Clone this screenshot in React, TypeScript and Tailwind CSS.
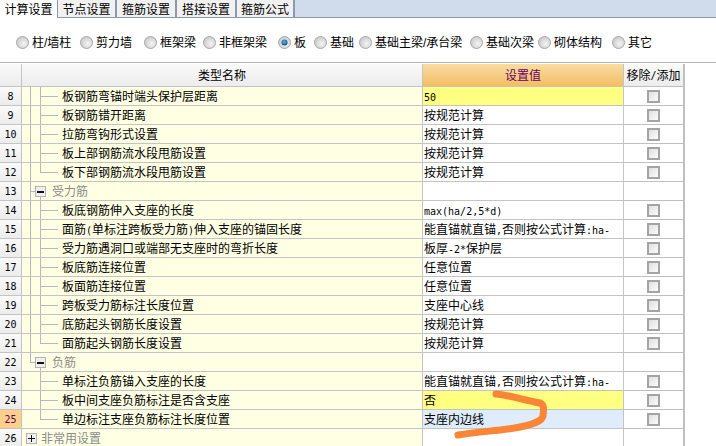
const font = "font-['Liberation_Sans','Noto_Sans_CJK_SC',sans-serif]";

const tabs = [
  { label: '节点设置', width: 'w-[59px]' },
  { label: '箍筋设置', width: 'w-[60px]' },
  { label: '搭接设置', width: 'w-[60px]' },
  { label: '箍筋公式', width: 'w-[58px]' },
];

const radios = [
  { label: '柱/墙柱', width: 'w-[64px]' },
  { label: '剪力墙', width: 'w-[64px]' },
  { label: '框架梁', width: 'w-[59px]' },
  { label: '非框架梁', width: 'w-[75px]' },
  { label: '板', width: 'w-[36px]', checked: true },
  { label: '基础', width: 'w-[45px]' },
  { label: '基础主梁/承台梁', width: 'w-[111px]' },
  { label: '基础次梁', width: 'w-[68px]' },
  { label: '砌体结构', width: 'w-[74px]' },
  { label: '其它', width: 'w-[50px]' },
];

type Kind = 'leaf' | 'last' | 'group' | 'leafB' | 'lastB' | 'groupEnd' | 'leafC' | 'lastC' | 'collapsed';

type Row = {
  no: number;
  name: string;
  value: string;
  kind: Kind;
  valueBg?: string;
};

const rows: Row[] = [
  { no: 8, name: '板钢筋弯锚时端头保护层距离', value: '50', kind: 'leaf', valueBg: 'bg-[#ffff80]' },
  { no: 9, name: '板钢筋错开距离', value: '按规范计算', kind: 'leaf' },
  { no: 10, name: '拉筋弯钩形式设置', value: '按规范计算', kind: 'leaf' },
  { no: 11, name: '板上部钢筋流水段甩筋设置', value: '按规范计算', kind: 'leaf' },
  { no: 12, name: '板下部钢筋流水段甩筋设置', value: '按规范计算', kind: 'last' },
  { no: 13, name: '受力筋', value: '', kind: 'group' },
  { no: 14, name: '板底钢筋伸入支座的长度', value: 'max(ha/2,5*d)', kind: 'leafB' },
  { no: 15, name: '面筋(单标注跨板受力筋)伸入支座的锚固长度', value: '能直锚就直锚,否则按公式计算:ha-', kind: 'leafB' },
  { no: 16, name: '受力筋遇洞口或端部无支座时的弯折长度', value: '板厚-2*保护层', kind: 'leafB' },
  { no: 17, name: '板底筋连接位置', value: '任意位置', kind: 'leafB' },
  { no: 18, name: '板面筋连接位置', value: '任意位置', kind: 'leafB' },
  { no: 19, name: '跨板受力筋标注长度位置', value: '支座中心线', kind: 'leafB' },
  { no: 20, name: '底筋起头钢筋长度设置', value: '按规范计算', kind: 'leafB' },
  { no: 21, name: '面筋起头钢筋长度设置', value: '按规范计算', kind: 'lastB' },
  { no: 22, name: '负筋', value: '', kind: 'groupEnd' },
  { no: 23, name: '单标注负筋锚入支座的长度', value: '能直锚就直锚,否则按公式计算:ha-', kind: 'leafC' },
  { no: 24, name: '板中间支座负筋标注是否含支座', value: '否', kind: 'leafC', valueBg: 'bg-[#ffff80]' },
  { no: 25, name: '单边标注支座负筋标注长度位置', value: '支座内边线', kind: 'lastC', valueBg: 'bg-[#deecfb]' },
  { no: 26, name: '非常用设置', value: '', kind: 'collapsed' },
];

// latin runs are half width (6px) in the grid, like a bitmap song face
const Mixed = ({ text }: { text: string }) => (
  <>
    {text.split(/([\x20-\x7e]+)/).map((part, index) =>
      index % 2 === 1 ? (
        <span key={index} className="font-['DejaVu_Sans_Mono',monospace] text-[10px]">{part}</span>
      ) : (
        <span key={index}>{part}</span>
      )
    )}
  </>
);

const Radio = ({ checked }: { checked?: boolean }) => (
  <svg width="13" height="13" viewBox="0 0 13 13" className="shrink-0">
    <defs>
      <radialGradient id="radio-off" cx="0.6" cy="0.6" r="0.7">
        <stop offset="0" stopColor="#f4f4f4" />
        <stop offset="1" stopColor="#c4c4c4" />
      </radialGradient>
      <radialGradient id="radio-on" cx="0.45" cy="0.4" r="0.6">
        <stop offset="0" stopColor="#5cc0f0" />
        <stop offset="1" stopColor="#0a4a80" />
      </radialGradient>
    </defs>
    <circle cx="6.5" cy="6.5" r="6" fill="url(#radio-off)" stroke="#a8a8a8" />
    {checked && <circle cx="6.5" cy="6.5" r="3" fill="url(#radio-on)" />}
  </svg>
);

const TreeGuide = ({ kind }: { kind: Kind }) => {
  const line = '#b8b8b8';
  const isLeaf = kind.startsWith('leaf') || kind.startsWith('last');
  const isLast = kind.startsWith('last');
  const isGroup = kind === 'group' || kind === 'groupEnd';
  const outer = kind === 'leaf' || kind === 'last' || kind === 'leafB' || kind === 'lastB' || kind === 'group';
  const width = isGroup ? 30 : kind === 'collapsed' ? 19 : 40;

  return (
    <svg width={width} height="18" viewBox={`0 0 ${width} 18`} className="shrink-0" shapeRendering="crispEdges">
      {outer && <line x1="8.5" y1="0" x2="8.5" y2="18" stroke={line} />}
      {kind === 'groupEnd' && <line x1="8.5" y1="0" x2="8.5" y2="10" stroke={line} />}
      {isGroup && <line x1="8.5" y1="9.5" x2="14" y2="9.5" stroke={line} />}
      {isLeaf && (
        <>
          <line x1="18.5" y1="0" x2="18.5" y2={isLast ? 10 : 18} stroke={line} />
          <line x1="18.5" y1="9.5" x2="36" y2="9.5" stroke={line} />
        </>
      )}
      {isGroup && (
        <>
          <line x1="18.5" y1="14" x2="18.5" y2="18" stroke={line} />
          <rect x="13.5" y="4.5" width="10" height="10" fill="#efefef" stroke="#b4b4b4" />
          <rect x="15" y="9" width="7" height="2" fill="#111" />
        </>
      )}
      {kind === 'collapsed' && (
        <>
          <rect x="4.5" y="4.5" width="10" height="10" fill="#efefef" stroke="#b4b4b4" />
          <rect x="6" y="9" width="7" height="1" fill="#111" />
          <rect x="9" y="6" width="1" height="7" fill="#111" />
        </>
      )}
    </svg>
  );
};

const App = () => {
  return (
    <div className={`relative w-[716px] h-[446px] overflow-hidden bg-white text-[12px] leading-none text-black ${font}`}>
      <div className="flex h-[18px] bg-[#d0dcec] border-b border-[#8c99ab]">
        <div className="w-[58px] h-[18px] pt-[2px] bg-white flex items-center justify-center border-r border-[#8c99ab]">计算设置</div>
        {tabs.map((tab) => (
          <div
            key={tab.label}
            className={`${tab.width} h-[17px] pt-[2px] flex items-center justify-center bg-[#f1f1f1] border-r-2 border-[#8c99ab]`}
          >
            {tab.label}
          </div>
        ))}
      </div>

      <div className="flex items-center h-[44px] pt-[4px] pl-[16px]">
        {radios.map((radio) => (
          <div key={radio.label} className={`${radio.width} flex items-center gap-[3px] shrink-0`}>
            <Radio checked={radio.checked} />
            <span className="whitespace-nowrap pt-[1px]">{radio.label}</span>
          </div>
        ))}
      </div>

      <div className="border-t border-[#b4b4b8] pt-[1px]">
        <div className="flex h-[23px] w-[685px]">
          <div className="w-[22px] bg-gradient-to-b from-[#fafafa] to-[#ececec] border-r border-b border-[#c4c4c4]" />
          <div className="w-[401px] pt-[1px] flex items-center justify-center bg-gradient-to-b from-[#fafafa] to-[#ececec] border-r border-b border-[#c4c4c4]">类型名称</div>
          <div className="w-[201px] pt-[1px] flex items-center justify-center bg-gradient-to-b from-[#f8dda0] to-[#f3bd62] text-[#660066] border-r border-b border-[#c4c4c4]">设置值</div>
          <div className="w-[61px] pt-[1px] flex items-center justify-center bg-gradient-to-b from-[#fafafa] to-[#ececec] border-r-2 border-b border-[#c0c0c0] whitespace-nowrap">
            <Mixed text="移除/添加" />
          </div>
        </div>

        {rows.map((row) => {
          const isGroup = row.kind === 'group' || row.kind === 'groupEnd' || row.kind === 'collapsed';
          const active = row.no === 25;
          return (
            <div key={row.no} className="flex h-[19px] w-[685px]">
              <div className={`w-[22px] pt-[1px] flex items-center justify-center border-r border-b border-[#c4c4c4] font-['DejaVu_Sans_Mono',monospace] text-[10px] ${active ? 'bg-[#fdd08a] text-[#660066]' : 'bg-gradient-to-b from-[#fafafa] to-[#ececec]'}`}>
                {row.no}
              </div>
              <div className="w-[401px] flex items-center bg-[#ffffe3] border-r border-b border-[#c4c4c4]">
                <TreeGuide kind={row.kind} />
                <span className={`pt-[1px] whitespace-nowrap ${isGroup ? 'text-[#8c8c8c]' : ''}`}>
                  <Mixed text={row.name} />
                </span>
              </div>
              <div className={`w-[201px] pt-[1px] pl-[1px] flex items-center overflow-hidden whitespace-nowrap border-r border-b border-[#c4c4c4] ${row.valueBg ?? 'bg-white'}`}>
                <span><Mixed text={row.value} /></span>
              </div>
              <div className="w-[61px] flex items-center justify-center bg-white border-r-2 border-b border-[#c0c0c0]">
                {!isGroup && (
                  <span className="w-[13px] h-[13px] border-2 border-[#a4a4a4] bg-gradient-to-br from-[#e0e0e0] to-[#fbfbfb]" />
                )}
              </div>
            </div>
          );
        })}
      </div>

      <svg className="absolute left-[450px] top-[388px]" width="110" height="58" viewBox="0 0 110 58" fill="none">
        <path
          d="M46 6 C58 7 70 11 90 15 C94 17 94 20 93 28 C92 33 84 36 70 39 C52 43 30 43 8 47"
          stroke="#f98536"
          strokeWidth="7"
          strokeLinecap="round"
          strokeLinejoin="round"
        />
      </svg>
    </div>
  );
};

export default App;
